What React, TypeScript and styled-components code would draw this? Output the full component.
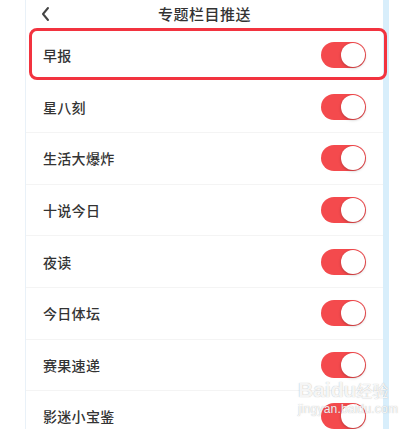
import React from 'react';
import styled, { createGlobalStyle, css } from 'styled-components';

const GlobalStyle = createGlobalStyle`
  html, body {
    margin: 0;
    padding: 0;
    background: #fff;
    font-family: "Noto Sans CJK SC", "Noto Sans", sans-serif;
    overflow: hidden;
  }
`;

const Page = styled.div`
  position: relative;
  display: flex;
  width: 418px;
  height: 429px;
  overflow: hidden;
  background: #fff;
`;

const Gutter = styled.div`
  width: 25px;
  flex-shrink: 0;
  border-right: 1px solid #e9f1f8;
`;

const Panel = styled.div`
  width: 357px;
  flex-shrink: 0;
  display: flex;
  flex-direction: column;
`;

const Strip = styled.div`
  width: 6px;
  flex-shrink: 0;
  background: #d8eefb;
`;

const Header = styled.div`
  position: relative;
  height: 30px;
  display: flex;
  align-items: center;
  justify-content: center;
  flex-shrink: 0;
`;

const Back = styled.button`
  position: absolute;
  left: 14px;
  top: 6px;
  border: none;
  background: none;
  padding: 0;
  width: 12px;
  height: 16px;
  cursor: pointer;
`;

const Title = styled.div`
  font-size: 15px;
  font-weight: 500;
  color: #333;
  letter-spacing: 0.5px;
  margin-top: -3px;
`;

const Row = styled.div<{ $highlight?: boolean }>`
  position: relative;
  height: 51.6px;
  flex-shrink: 0;
  display: flex;
  align-items: center;
  justify-content: space-between;
  padding: 0 17px;
  box-sizing: border-box;
  border-bottom: 1px solid #f4f4f4;

  ${p =>
    p.$highlight &&
    css`
      border-bottom-color: transparent;
      &::after {
        content: '';
        position: absolute;
        left: 3px;
        right: -4px;
        top: -2px;
        bottom: 1px;
        border: 3px solid #f2333f;
        border-radius: 8px;
        pointer-events: none;
      }
    `}
`;

const Label = styled.span`
  font-size: 14px;
  font-weight: 500;
  color: #333;
  letter-spacing: 0.3px;
`;

const Toggle = styled.div<{ $on: boolean }>`
  position: relative;
  width: 45px;
  height: 26px;
  border-radius: 13px;
  background: ${p => (p.$on ? '#f44a4d' : '#ddd')};
`;

const Knob = styled.div<{ $on: boolean }>`
  position: absolute;
  top: 1px;
  ${p => (p.$on ? 'right: 1px;' : 'left: 1px;')}
  width: 24px;
  height: 24px;
  border-radius: 50%;
  background: #fff;
  box-shadow: 0 1px 3px rgba(0, 0, 0, 0.25);
`;

const Watermark = styled.div`
  position: absolute;
  left: 298px;
  top: 378px;
  color: rgba(255, 255, 255, 0.9);
  text-shadow: 0 0 1px rgba(120, 120, 120, 0.6);
  pointer-events: none;
  font-family: "Liberation Sans", sans-serif;
`;

const MarkTop = styled.div`
  font-size: 21px;
  font-weight: bold;
  line-height: 24px;
  white-space: nowrap;

  span {
    font-family: "Noto Sans CJK SC", sans-serif;
    font-size: 16px;
    font-weight: normal;
  }
`;

const MarkUrl = styled.div`
  font-size: 12px;
  line-height: 14px;
  letter-spacing: 0.2px;
`;

const ITEMS = ['早报', '星八刻', '生活大爆炸', '十说今日', '夜读', '今日体坛', '赛果速递', '影迷小宝鉴'];

export default function App() {
  return (
    <Page>
      <GlobalStyle />
      <Gutter />
      <Panel>
        <Header>
          <Back aria-label="back">
            <svg width="12" height="16" viewBox="0 0 12 16">
              <polyline points="8,2 3,8 8,14" fill="none" stroke="#444" strokeWidth="2" strokeLinecap="round" strokeLinejoin="round" />
            </svg>
          </Back>
          <Title>专题栏目推送</Title>
        </Header>
        {ITEMS.map((item, i) => (
          <Row key={item} $highlight={i === 0}>
            <Label>{item}</Label>
            <Toggle $on>
              <Knob $on />
            </Toggle>
          </Row>
        ))}
      </Panel>
      <Strip />
      <Watermark>
        <MarkTop>
          Baidu<span>经验</span>
        </MarkTop>
        <MarkUrl>jingyan.baidu.com</MarkUrl>
      </Watermark>
    </Page>
  );
}
